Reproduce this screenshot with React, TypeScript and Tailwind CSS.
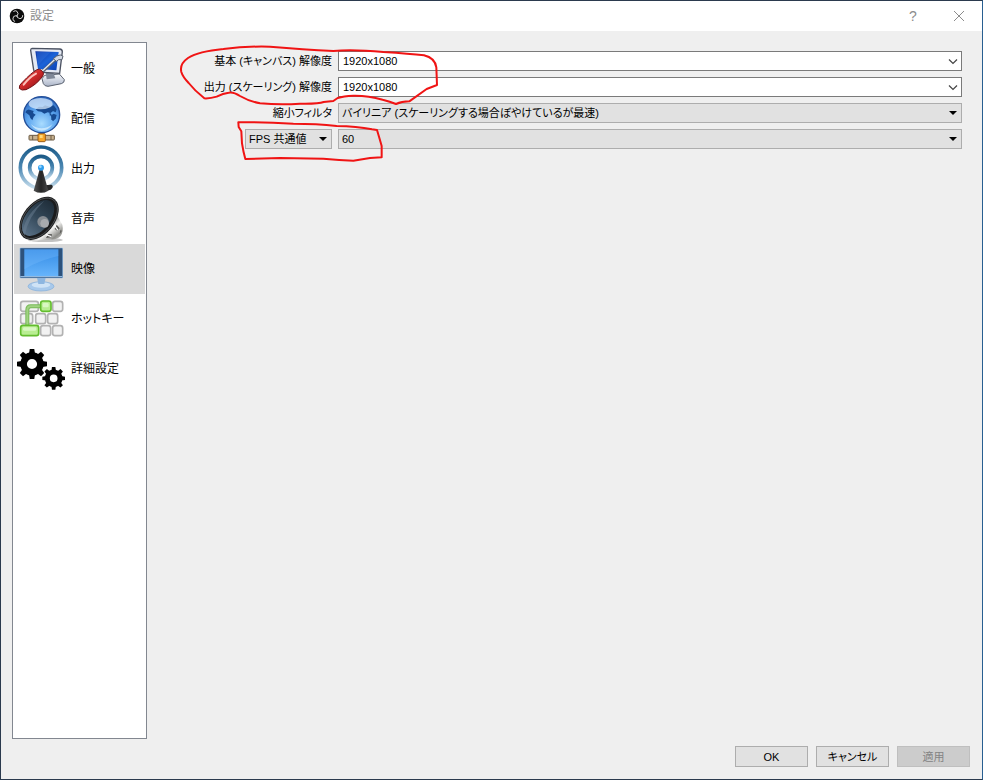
import { useState } from 'react';
import type { ReactNode } from 'react';

interface Page {
  id: string;
  label: string;
  icon: ReactNode;
}

function Gear({ cx, cy, r }: { cx: number; cy: number; r: number }) {
  return (
    <g transform={`translate(${cx} ${cy})`}>
      <circle r={r * 0.56} fill="none" stroke="#000" strokeWidth={r * 0.44} />
      {[0, 45, 90, 135, 180, 225, 270, 315].map((a) => (
        <path
          key={a}
          transform={`rotate(${a})`}
          d={`M${-r * 0.2} ${-r * 0.68} L${-r * 0.15} ${-r} H${r * 0.15} L${r * 0.2} ${-r * 0.68} Z`}
        />
      ))}
    </g>
  );
}

function IconBox({ children }: { children: ReactNode }) {
  return (
    <svg viewBox="0 0 162 150" className="h-[50px] w-[54px] shrink-0" aria-hidden="true">
      {children}
    </svg>
  );
}

const generalIcon = (
  <IconBox>
    <defs>
      <linearGradient id="screen" x1="0" y1="0" x2="1" y2="1">
        <stop offset="0" stopColor="#0b2d9c" />
        <stop offset="0.5" stopColor="#1b63d8" />
        <stop offset="1" stopColor="#0c3fb0" />
      </linearGradient>
      <linearGradient id="handle" x1="0" y1="0" x2="1" y2="1">
        <stop offset="0" stopColor="#f08a80" />
        <stop offset="0.45" stopColor="#d32c2c" />
        <stop offset="1" stopColor="#7d0d12" />
      </linearGradient>
      <linearGradient id="base" x1="0" y1="0" x2="0" y2="1">
        <stop offset="0" stopColor="#f6f8fc" />
        <stop offset="1" stopColor="#aab4c8" />
      </linearGradient>
    </defs>
    <path d="M84 104 L92 94 L136 90 L151 107 Q152 116 142 119 L102 127 Q92 127 88 119 Z" fill="url(#base)" stroke="#5b6270" strokeWidth="3" />
    <path d="M95 86 L118 86 L124 103 L98 106 Z" fill="#7e8797" />
    <path d="M54 13 L137 15 Q145 16 145 23 L137 88 L65 84 Q60 84 59 78 L50 19 Q50 13 54 13 Z" fill="#e4e9f3" stroke="#4b5262" strokeWidth="4" />
    <path d="M64 22 L134 24 L127 79 L72 75 Z" fill="url(#screen)" />
    <path d="M67 24 L110 25 Q88 46 72 64 Z" fill="#2d6fdc" opacity="0.5" />
    <path d="M82 86 L124 47" stroke="#596271" strokeWidth="9" />
    <path d="M81 85 L123 46" stroke="#e5e9f0" strokeWidth="4" />
    <path d="M118 44 L127 52 L134 47 L144 47 L147 36 L139 33 L128 36 Z" fill="#d3d9e3" stroke="#596271" strokeWidth="3" />
    <path d="M69 77 Q76 73 82 79 L88 86 Q90 92 84 99 Q67 123 36 137 Q22 141 16 133 Q14 124 25 115 Q52 86 69 77 Z" fill="url(#handle)" stroke="#711216" strokeWidth="3" />
    <path d="M29 122 Q46 100 66 89" fill="none" stroke="#fbc2bb" strokeWidth="6" strokeLinecap="round" />
  </IconBox>
);

const streamIcon = (
  <IconBox>
    <defs>
      <radialGradient id="ocean" cx="0.5" cy="0.75" r="0.75">
        <stop offset="0" stopColor="#a9dcff" />
        <stop offset="0.55" stopColor="#5ba4ee" />
        <stop offset="1" stopColor="#2a65bd" />
      </radialGradient>
    </defs>
    <rect x="76" y="112" width="14" height="12" fill="#8f98a6" stroke="#5e6572" strokeWidth="2" />
    <rect x="45" y="124" width="76" height="14" rx="2" fill="#c9b290" stroke="#6a5a45" strokeWidth="3" />
    <path d="M56 124 V138 M111 124 V138" stroke="#6a5a45" strokeWidth="3" />
    <rect x="72" y="119" width="22" height="24" rx="3" fill="#f7a72a" stroke="#9a5c17" strokeWidth="3" />
    <rect x="77" y="123" width="9" height="9" fill="#ffd978" />
    <circle cx="83" cy="62" r="54" fill="url(#ocean)" stroke="#234f99" strokeWidth="4" />
    <path d="M34 55 Q39 43 49 48 L59 51 L57 57 L65 62 L59 68 L55 79 L49 72 L46 64 Z" fill="#174a91" />
    <path d="M65 46 L75 38 L86 39 L93 34 L107 38 L119 34 L128 46 L125 55 L117 51 L110 57 L101 55 L91 59 L82 53 L72 52 Z" fill="#174a91" />
    <path d="M111 64 L119 59 L128 63 L125 74 L117 82 L112 76 Z" fill="#174a91" />
    <path d="M106 55 L113 61 L108 67 Z" fill="#174a91" />
    <ellipse cx="80" cy="29" rx="36" ry="17" fill="#e3f1ff" opacity="0.7" />
    <path d="M50 90 Q83 116 116 90 Q103 110 83 110 Q63 110 50 90 Z" fill="#dff4ff" opacity="0.7" />
  </IconBox>
);

const outputIcon = (
  <IconBox>
    <defs>
      <linearGradient id="wave" x1="0" y1="0" x2="0" y2="1">
        <stop offset="0" stopColor="#1c5b88" />
        <stop offset="0.5" stopColor="#4c88b3" />
        <stop offset="1" stopColor="#c7deed" />
      </linearGradient>
      <linearGradient id="mast">
        <stop offset="0" stopColor="#555" />
        <stop offset="0.5" stopColor="#252525" />
        <stop offset="1" stopColor="#484848" />
      </linearGradient>
    </defs>
    <circle cx="81" cy="71" r="62" fill="none" stroke="url(#wave)" strokeWidth="11" />
    <circle cx="81" cy="71" r="34" fill="none" stroke="url(#wave)" strokeWidth="11" />
    <path d="M88 124 L113 122 Q121 128 110 137 L95 142 Z" fill="#282828" />
    <path d="M77 76 H85 L103 140 Q81 153 59 140 Z" fill="url(#mast)" />
    <circle cx="81" cy="71" r="9" fill="#2f9dec" />
    <circle cx="79" cy="68" r="4" fill="#9ad8ff" />
  </IconBox>
);

const audioIcon = (
  <IconBox>
    <defs>
      <linearGradient id="metal" x1="0" y1="0" x2="1" y2="1">
        <stop offset="0.3" stopColor="#555" />
        <stop offset="0.6" stopColor="#f2f2f0" />
        <stop offset="0.8" stopColor="#8e8e8a" />
        <stop offset="1" stopColor="#dededc" />
      </linearGradient>
      <linearGradient id="cone" x1="0" y1="0" x2="1" y2="0">
        <stop offset="0" stopColor="#5b7287" />
        <stop offset="0.5" stopColor="#334859" />
        <stop offset="1" stopColor="#1f2d39" />
      </linearGradient>
    </defs>
    <ellipse cx="94" cy="138" rx="52" ry="6" fill="#777" opacity="0.45" />
    <path d="M128 62 L145 92 Q149 111 140 126 Q129 138 110 136 L46 142 Z" fill="url(#metal)" />
    <path d="M128 92 L137 103 L131 111 L122 105 Z M103 120 L114 121 L112 130 L96 132 Z M140 107 L143 111 L137 120 Z" fill="#52524f" />
    <path d="M120 92 L132 109 M96 122 L112 128" stroke="#fafafa" strokeWidth="4" />
    <g transform="translate(75 73) rotate(-51)">
      <ellipse rx="74" ry="47" fill="#1a1b1c" />
      <ellipse rx="70" ry="43" fill="none" stroke="#626467" strokeWidth="2" />
      <ellipse cx="-1" cy="-3" rx="63" ry="36" fill="url(#cone)" />
    </g>
    <path d="M26 113 Q35 58 91 20 Q41 69 32 127 Z" fill="#718599" opacity="0.45" />
    <circle cx="87" cy="83" r="17" fill="#858b91" />
    <circle cx="92" cy="88" r="13" fill="#a8abae" />
  </IconBox>
);

const videoIcon = (
  <IconBox>
    <defs>
      <linearGradient id="lcd" x1="0" y1="0" x2="0" y2="1">
        <stop offset="0" stopColor="#348be5" />
        <stop offset="1" stopColor="#66b4fb" />
      </linearGradient>
    </defs>
    <ellipse cx="81" cy="127" rx="39" ry="14" fill="#a8c9eb" stroke="#83add9" strokeWidth="2" />
    <ellipse cx="81" cy="123" rx="28" ry="8" fill="#cfe3f6" />
    <path d="M69 101 H95 L91 120 H73 Z" fill="#8db6e0" />
    <rect x="17" y="11" width="130" height="92" rx="3" fill="#8bb4dd" />
    <rect x="19" y="13" width="126" height="88" rx="1" fill="#2d527c" />
    <rect x="31" y="16" width="102" height="80" fill="url(#lcd)" />
    <path d="M31 16 H133 V36 Q77 48 31 76 Z" fill="#7fc0ff" opacity="0.3" />
    <path d="M19 98 H145" stroke="#a7cef4" strokeWidth="3" />
  </IconBox>
);

const hotkeyIcon = (
  <IconBox>
    <g fill="#f2f2f2" stroke="#b2b2b2" strokeWidth="5">
      <rect x="20" y="22" width="53" height="30" rx="7" />
      <rect x="116" y="22" width="30" height="30" rx="7" />
      <rect x="20" y="59" width="36" height="30" rx="7" />
      <rect x="65" y="59" width="30" height="30" rx="7" />
      <rect x="101" y="59" width="30" height="30" rx="7" />
      <rect x="80" y="95" width="30" height="30" rx="7" />
      <rect x="116" y="95" width="30" height="30" rx="7" />
    </g>
    <path d="M79 37 H50 Q40 37 40 48 V94" fill="none" stroke="#78ba58" strokeWidth="12" />
    <path d="M79 37 H50 Q40 37 40 48 V94" fill="none" stroke="#a0d282" strokeWidth="6" />
    <g fill="#b9ee92" stroke="#63bd2e" strokeWidth="5">
      <rect x="80" y="21" width="31" height="31" rx="7" />
      <rect x="20" y="94" width="54" height="31" rx="7" />
    </g>
    <rect x="86" y="27" width="18" height="13" rx="4" fill="#d9f8c2" />
    <rect x="27" y="100" width="40" height="10" rx="4" fill="#d9f8c2" />
  </IconBox>
);

const advancedIcon = (
  <IconBox>
    <Gear cx={54} cy={60} r={45} />
    <Gear cx={119} cy={103} r={34} />
  </IconBox>
);

const pages: Page[] = [
  { id: 'general', label: '一般', icon: generalIcon },
  { id: 'stream', label: '配信', icon: streamIcon },
  { id: 'output', label: '出力', icon: outputIcon },
  { id: 'audio', label: '音声', icon: audioIcon },
  { id: 'video', label: '映像', icon: videoIcon },
  { id: 'hotkeys', label: 'ホットキー', icon: hotkeyIcon },
  { id: 'advanced', label: '詳細設定', icon: advancedIcon },
];

function Logo() {
  return (
    <svg viewBox="0 0 48 48" className="size-4" aria-hidden="true">
      <circle cx="24" cy="24" r="22" fill="#0c0c0c" />
      <g fill="none" stroke="#d6d6d6" strokeWidth="3" strokeLinecap="round">
        {[0, 120, 240].map((a) => (
          <path key={a} transform={`rotate(${a} 24 24)`} d="M24 24 Q31 17 24 10 Q19 6 14 10" />
        ))}
      </g>
    </svg>
  );
}

interface ComboProps {
  id: string;
  value: string;
  label?: string;
  editable?: boolean;
}

function Combo({ id, value, label, editable }: ComboProps) {
  return (
    <div className="relative flex-1">
      <select
        id={id}
        aria-label={label}
        className={`block h-5 w-full appearance-none border pr-4 text-black ${
          editable ? 'border-[#7a7a7a] bg-white pl-1' : 'border-[#adadad] bg-[#e1e1e1] pl-[3px]'
        }`}
      >
        <option>{value}</option>
      </select>
      <svg viewBox="0 0 10 10" className="pointer-events-none absolute top-[5px] right-1 size-[10px]" aria-hidden="true">
        {editable ? (
          <path d="M1 3.5 L5 7.5 L9 3.5" fill="none" stroke="#444" strokeWidth="1.2" />
        ) : (
          <path d="M1 3 H9 L5 7 Z" />
        )}
      </svg>
    </div>
  );
}

const labelClass = 'w-[179px] shrink-0 text-right whitespace-nowrap';
const buttonClass = 'h-[21px] w-[73px] border border-[#adadad] bg-[#e1e1e1] disabled:border-[#bfbfbf] disabled:bg-[#cccccc] disabled:text-[#838383]';

export default function App() {
  const [current, setCurrent] = useState('video');

  return (
    <div className="flex min-h-screen flex-col border border-[#2b3a4e] border-r-[#285f91] bg-[#efefef] font-['Liberation_Sans','Noto_Sans_CJK_JP',sans-serif] text-[12px] leading-[18px] text-black [font-feature-settings:'palt']">
      <header className="flex h-[30px] items-center bg-white pl-2 text-[#8c8c8c]">
        <Logo />
        <h1 className="ml-[5px] flex-1">設定</h1>
        <button aria-label="ヘルプ" className="h-full w-[46px] text-[14px]">?</button>
        <button aria-label="閉じる" className="flex h-full w-[46px] items-center justify-center">
          <svg viewBox="0 0 12 12" className="size-3" aria-hidden="true">
            <path d="M1 1 L11 11 M11 1 L1 11" fill="none" stroke="#8c8c8c" strokeWidth="1" />
          </svg>
        </button>
      </header>

      <div className="flex flex-1 gap-[6px] pt-[11px] pr-5 pl-[11px]">
        <nav className="w-[135px] shrink-0 border border-[#828790] bg-white p-px">
          {pages.map((page) => (
            <button
              key={page.id}
              onClick={() => setCurrent(page.id)}
              className={`flex h-[50px] w-full items-center gap-[3px] text-left ${
                current === page.id ? 'bg-[#d9d9d9]' : ''
              }`}
            >
              {page.icon}
              {page.label}
            </button>
          ))}
        </nav>

        {/* Video settings */}
        <main className="relative flex-1 pt-[9px]">
          <form className="flex flex-col gap-[6px] text-[11px]">
            <div className="flex items-center gap-[6px]">
              <label htmlFor="base" className={labelClass}>基本 (キャンバス) 解像度</label>
              <Combo id="base" value="1920x1080" editable />
            </div>
            <div className="flex items-center gap-[6px]">
              <label htmlFor="scaled" className={labelClass}>出力 (スケーリング) 解像度</label>
              <Combo id="scaled" value="1920x1080" editable />
            </div>
            <div className="flex items-center gap-[6px]">
              <label htmlFor="filter" className={labelClass}>縮小フィルタ</label>
              <Combo id="filter" value="バイリニア (スケーリングする場合ぼやけているが最速)" />
            </div>
            <div className="flex items-center gap-[6px]">
              <div className="flex w-[179px] shrink-0 pl-[92px]">
                <Combo id="fpsType" label="FPS タイプ" value="FPS 共通値" />
              </div>
              <Combo id="fps" label="FPS" value="60" />
            </div>
          </form>

          {/* Red pen marks around resolution and FPS */}
          <svg
            viewBox="0 0 840 390"
            className="pointer-events-none absolute -top-[2px] left-[17px] h-[130px] w-[280px]"
            fill="none"
            stroke="#f01414"
            strokeWidth="6"
            strokeLinejoin="round"
            aria-hidden="true"
          >
            <path d="M34 96 Q28 72 54 54 Q86 34 160 27 Q230 18 300 20 Q400 28 490 33 Q550 28 640 36 Q720 41 762 46 Q795 54 799 82 L801 135 L770 147 L718 184 Q695 184 678 192 Q660 184 638 179 Q592 166 550 167 Q520 168 503 174 L490 183 L461 186 Q446 192 390 191 Q330 195 270 190 Q235 183 210 168 Q190 155 176 158 Q160 160 140 170 Q120 176 103 175 Q75 153 56 129 Q38 110 34 96 Z" />
            <path d="M205 247 L206 261 L214 274 L216 310 Q220 336 226 357 L330 354 L460 356 Q510 360 550 362 L600 354 L635 352 L635 318 Q630 300 621 270 L606 268 Q560 259 500 258 Q440 251 370 251 Q280 246 205 247 Z" />
          </svg>
        </main>
      </div>

      <footer className="flex justify-end gap-2 pt-[7px] pr-3 pb-3 text-[11px]">
        <button className={buttonClass}>OK</button>
        <button className={buttonClass}>キャンセル</button>
        <button className={buttonClass} disabled>適用</button>
      </footer>
    </div>
  );
}
